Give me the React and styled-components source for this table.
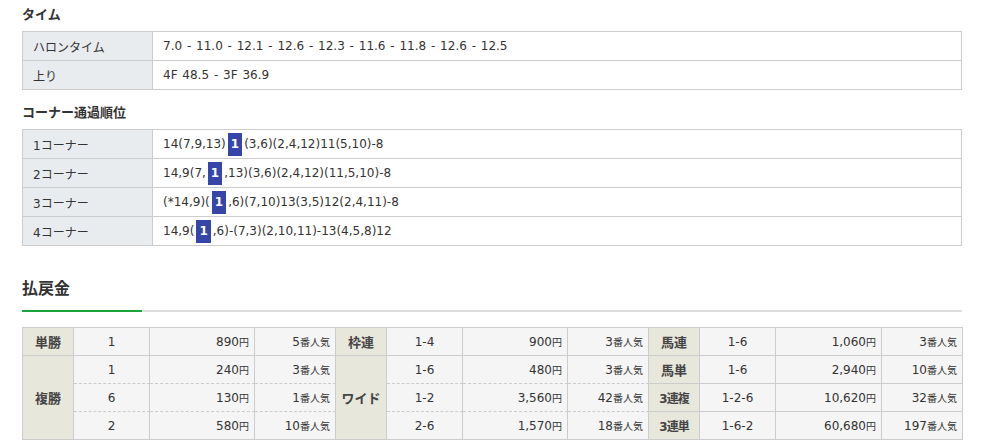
import React from "react";
import styled, { createGlobalStyle } from "styled-components";

const GlobalStyle = createGlobalStyle`
  body {
    margin: 0;
    background: #fff;
    color: #333;
    font-family: "DejaVu Sans", "Noto Sans CJK JP", sans-serif;
    font-size: 12px;
  }
  * { box-sizing: border-box; }
`;

const Page = styled.div`
  width: 984px;
  padding: 6px 22px 0;
`;

const SectionTitle = styled.h3`
  margin: ${(p) => p.$top || 0}px 0 7px;
  font-size: 13px;
  line-height: 18px;
  font-weight: bold;
  color: #333;
`;

const InfoTable = styled.table`
  width: 100%;
  border-collapse: collapse;
  border: 1px solid #ccc;
`;

const InfoHead = styled.th`
  width: 130px;
  height: 29px;
  padding: 0 10px;
  background: #e9ecef;
  border: 1px solid #ccc;
  font-weight: normal;
  text-align: left;
  color: #333;
`;

const InfoCell = styled.td`
  height: 29px;
  padding: 0 10px;
  background: #fff;
  border: 1px solid #ccc;
  white-space: nowrap;
  word-spacing: 1px;
`;

const Mark = styled.span`
  display: inline-block;
  margin: 0 2px;
  padding: 0 3px;
  line-height: 23px;
  background: #3546a8;
  color: #fff;
  font-weight: bold;
  vertical-align: middle;
`;

const PayTitle = styled.h2`
  margin: 32px 0 0;
  font-size: 16px;
  line-height: 22px;
  font-weight: bold;
  color: #333;
`;

const Rule = styled.div`
  margin-top: 10px;
  height: 2px;
  background: linear-gradient(to right, #1ca43a 120px, #dedede 120px);
`;

const PayTable = styled.table`
  width: 100%;
  margin-top: 15px;
  table-layout: fixed;
  border-collapse: separate;
  border-spacing: 0;
  border-top: 1px solid #ccc;
  border-left: 1px solid #ccc;
`;

const PayCell = styled.td`
  height: 28px;
  padding: 0 5px;
  background: #f5f5f5;
  border-right: 1px solid #ccc;
  border-bottom: 1px ${(p) => (p.$dashed ? "dashed" : "solid")} #ccc;
  text-align: ${(p) => p.$align || "center"};
  white-space: nowrap;
  color: #333;
`;

const PayLabel = styled.th`
  height: 28px;
  padding: 0;
  background: #e8e7dc;
  border-right: 1px solid #ccc;
  border-bottom: 1px solid #ccc;
  font-size: ${(p) => (p.$narrow ? "12px" : "13px")};
  letter-spacing: ${(p) => (p.$narrow ? "-1px" : "0")};
  font-weight: bold;
  color: #444;
  text-align: center;
`;

const Unit = styled.span`
  font-size: 10px;
`;

const corners = [
  ["1コーナー", ["14(7,9,13)", "(3,6)(2,4,12)11(5,10)-8"]],
  ["2コーナー", ["14,9(7,", ",13)(3,6)(2,4,12)(11,5,10)-8"]],
  ["3コーナー", ["(*14,9)(", ",6)(7,10)13(3,5)12(2,4,11)-8"]],
  ["4コーナー", ["14,9(", ",6)-(7,3)(2,10,11)-13(4,5,8)12"]],
];

const Bet = ({ n, yen, pop, dashed }) => (
  <>
    <PayCell $dashed={dashed}>{n}</PayCell>
    <PayCell $dashed={dashed} $align="right">
      {yen}
      <Unit>円</Unit>
    </PayCell>
    <PayCell $dashed={dashed} $align="right">
      {pop}
      <Unit>番人気</Unit>
    </PayCell>
  </>
);

const widths = [51, 76, 105, 81, 51, 76, 105, 81, 51, 76, 106, 81];

export default function App() {
  return (
    <>
      <GlobalStyle />
      <Page>
        <SectionTitle>タイム</SectionTitle>
        <InfoTable>
          <tbody>
            <tr>
              <InfoHead>ハロンタイム</InfoHead>
              <InfoCell>
                7.0 - 11.0 - 12.1 - 12.6 - 12.3 - 11.6 - 11.8 - 12.6 - 12.5
              </InfoCell>
            </tr>
            <tr>
              <InfoHead>上り</InfoHead>
              <InfoCell>4F 48.5 - 3F 36.9</InfoCell>
            </tr>
          </tbody>
        </InfoTable>

        <SectionTitle $top={14}>コーナー通過順位</SectionTitle>
        <InfoTable>
          <tbody>
            {corners.map(([name, [before, after]]) => (
              <tr key={name}>
                <InfoHead>{name}</InfoHead>
                <InfoCell>
                  {before}
                  <Mark>1</Mark>
                  {after}
                </InfoCell>
              </tr>
            ))}
          </tbody>
        </InfoTable>

        <PayTitle>払戻金</PayTitle>
        <Rule />
        <PayTable>
          <colgroup>
            {widths.map((w, i) => (
              <col key={i} style={{ width: w }} />
            ))}
          </colgroup>
          <tbody>
            <tr>
              <PayLabel>単勝</PayLabel>
              <Bet n="1" yen="890" pop="5" />
              <PayLabel>枠連</PayLabel>
              <Bet n="1-4" yen="900" pop="3" />
              <PayLabel>馬連</PayLabel>
              <Bet n="1-6" yen="1,060" pop="3" />
            </tr>
            <tr>
              <PayLabel rowSpan={3}>複勝</PayLabel>
              <Bet n="1" yen="240" pop="3" dashed />
              <PayLabel rowSpan={3}>ワイド</PayLabel>
              <Bet n="1-6" yen="480" pop="3" dashed />
              <PayLabel>馬単</PayLabel>
              <Bet n="1-6" yen="2,940" pop="10" />
            </tr>
            <tr>
              <Bet n="6" yen="130" pop="1" dashed />
              <Bet n="1-2" yen="3,560" pop="42" dashed />
              <PayLabel $narrow>3連複</PayLabel>
              <Bet n="1-2-6" yen="10,620" pop="32" />
            </tr>
            <tr>
              <Bet n="2" yen="580" pop="10" />
              <Bet n="2-6" yen="1,570" pop="18" />
              <PayLabel $narrow>3連単</PayLabel>
              <Bet n="1-6-2" yen="60,680" pop="197" />
            </tr>
          </tbody>
        </PayTable>
      </Page>
    </>
  );
}
